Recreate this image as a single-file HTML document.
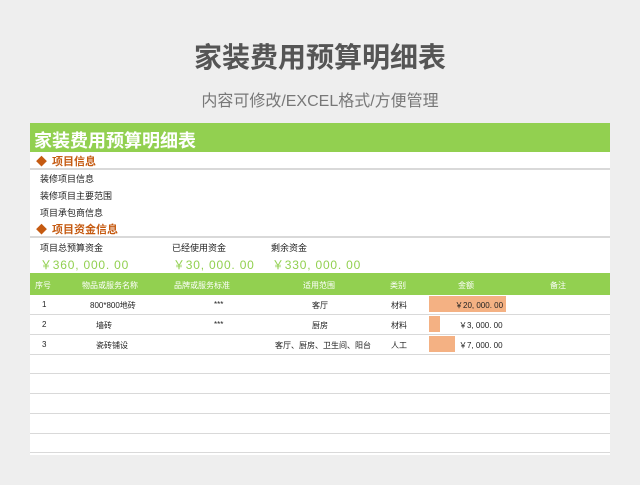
<!DOCTYPE html>
<html><head><meta charset="utf-8"><style>
*{margin:0;padding:0;box-sizing:border-box}
body{width:640px;height:485px;background:#eeeeee;font-family:"Liberation Sans","Noto Sans CJK SC",sans-serif;position:relative;overflow:hidden}
.a{position:absolute;white-space:nowrap}
.sheet{position:absolute;left:30px;top:123px;width:580px;height:332px;background:#fff}
.g{background:#92d050}
.t{font-size:9px;color:#222}
.h{font-size:8px;color:#fff;top:280px}
.c{font-size:8px;color:#222}
.sec{font-size:11px;color:#c55a11;font-weight:bold}
.sec span{margin-left:5px}
.amt{font-size:12px;color:#92d050;letter-spacing:0.8px}
.bar{position:absolute;background:#f4b183}
</style></head><body>
<div class="a" style="left:0;width:640px;text-align:center;top:36px;font-size:28px;font-weight:bold;color:#555">家装费用预算明细表</div>
<div class="a" style="left:0;width:640px;text-align:center;top:87px;font-size:16px;color:#777">内容可修改/EXCEL格式/方便管理</div>
<div class="sheet"></div>
<div class="a g" style="left:30px;top:123px;width:580px;height:29px"></div>
<div class="a" style="left:34px;top:127px;font-size:18px;font-weight:bold;color:#fff">家装费用预算明细表</div>
<div class="a sec" style="left:36px;top:153px">◆<span>项目信息</span></div>
<div class="a" style="left:30px;top:168px;width:580px;height:2px;background:#d9d9d9"></div>
<div class="a t" style="left:40px;top:172px">装修项目信息</div>
<div class="a t" style="left:40px;top:189px">装修项目主要范围</div>
<div class="a t" style="left:40px;top:206px">项目承包商信息</div>
<div class="a sec" style="left:36px;top:221px">◆<span>项目资金信息</span></div>
<div class="a" style="left:30px;top:236px;width:580px;height:2px;background:#d9d9d9"></div>
<div class="a t" style="left:40px;top:241px">项目总预算资金</div>
<div class="a t" style="left:172px;top:241px">已经使用资金</div>
<div class="a t" style="left:271px;top:241px">剩余资金</div>
<div class="a amt" style="left:40px;top:256px">￥360, 000. 00</div>
<div class="a amt" style="left:173px;top:256px">￥30, 000. 00</div>
<div class="a amt" style="left:272px;top:256px">￥330, 000. 00</div>
<div class="a g" style="left:30px;top:273px;width:580px;height:22px"></div>
<div class="a h" style="left:35px">序号</div>
<div class="a h" style="left:82px">物品或服务名称</div>
<div class="a h" style="left:174px">品牌或服务标准</div>
<div class="a h" style="left:303px">适用范围</div>
<div class="a h" style="left:390px">类别</div>
<div class="a h" style="left:458px">金额</div>
<div class="a h" style="left:550px">备注</div>
<div class="bar" style="left:429px;top:296px;width:77px;height:16px"></div>
<div class="bar" style="left:429px;top:316px;width:11px;height:16px"></div>
<div class="bar" style="left:429px;top:336px;width:26px;height:16px"></div>
<div class="a c" style="left:42px;top:300px">1</div><div class="a c" style="left:90px;top:300px">800*800地砖</div><div class="a c" style="left:214px;top:300px">***</div><div class="a c" style="left:312px;top:300px">客厅</div><div class="a c" style="left:391px;top:300px">材料</div><div class="a c" style="left:455px;top:300px">￥20, 000. 00</div>
<div class="a c" style="left:42px;top:320px">2</div><div class="a c" style="left:96px;top:320px">墙砖</div><div class="a c" style="left:214px;top:320px">***</div><div class="a c" style="left:312px;top:320px">厨房</div><div class="a c" style="left:391px;top:320px">材料</div><div class="a c" style="left:459px;top:320px">￥3, 000. 00</div>
<div class="a c" style="left:42px;top:340px">3</div><div class="a c" style="left:96px;top:340px">瓷砖铺设</div><div class="a c" style="left:275px;top:340px">客厅、厨房、卫生间、阳台</div><div class="a c" style="left:391px;top:340px">人工</div><div class="a c" style="left:459px;top:340px">￥7, 000. 00</div>
<div class="a" style="left:30px;top:314px;width:580px;height:1px;background:#d9d9d9"></div>
<div class="a" style="left:30px;top:334px;width:580px;height:1px;background:#d9d9d9"></div>
<div class="a" style="left:30px;top:354px;width:580px;height:1px;background:#d9d9d9"></div>
<div class="a" style="left:30px;top:373px;width:580px;height:1px;background:#d9d9d9"></div>
<div class="a" style="left:30px;top:393px;width:580px;height:1px;background:#d9d9d9"></div>
<div class="a" style="left:30px;top:413px;width:580px;height:1px;background:#d9d9d9"></div>
<div class="a" style="left:30px;top:433px;width:580px;height:1px;background:#d9d9d9"></div>
<div class="a" style="left:30px;top:452px;width:580px;height:1px;background:#d9d9d9"></div>
</body></html>
